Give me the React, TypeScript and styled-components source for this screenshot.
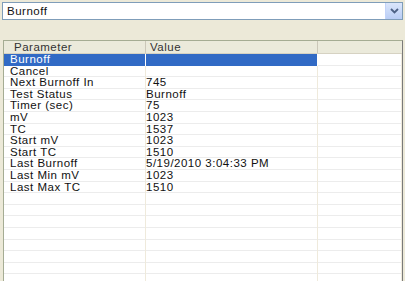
import React from "react";
import styled, { createGlobalStyle } from "styled-components";

const Global = createGlobalStyle`
  html, body {
    margin: 0;
    padding: 0;
    background: #ece9d8;
    overflow: hidden;
  }
`;

const Page = styled.div`
  width: 405px;
  height: 281px;
  background: #ece9d8;
  font-family: Tahoma, "Liberation Sans", Arial, sans-serif;
  font-size: 11.5px;
  letter-spacing: 0.5px;
  color: #111;
  display: flex;
  flex-direction: column;
  padding: 2px 2px 0 2px;
  box-sizing: border-box;
  overflow: hidden;
`;

const Combo = styled.div`
  height: 18px;
  background: #fff;
  border: 1px solid #7f9db9;
  box-sizing: border-box;
  display: flex;
  align-items: center;
  padding-left: 4px;
`;

const ComboText = styled.span`
  flex: 1;
  line-height: 14px;
`;

const DropButton = styled.div`
  width: 16px;
  height: 16px;
  background: linear-gradient(#dbe6fb, #b9cdf5);
  border-left: 1px solid #c2d3f9;
  display: flex;
  align-items: center;
  justify-content: center;
`;

const List = styled.div`
  margin-top: 20px;
  margin-left: 1px;
  flex: 1;
  background: #fff;
  border-left: 1px solid #a5ac93;
  border-right: 1px solid #7a7a7a;
  border-top: 1px solid #a5ac93;
  display: flex;
  flex-direction: column;
  overflow: hidden;
`;

const Header = styled.div`
  display: flex;
  height: 12px;
  flex-shrink: 0;
  background: #ebeadb;
  border-bottom: 1px solid #d6d2c2;
`;

const HeadCell = styled.div<{ $w?: number; $first?: boolean; $last?: boolean }>`
  ${(p) => (p.$w ? `width: ${p.$w}px;` : "flex: 1;")}
  box-sizing: border-box;
  padding-left: ${(p) => (p.$first ? 10 : 4)}px;
  line-height: 12px;
  color: #333;
  white-space: nowrap;
  border-right: ${(p) => (p.$last ? "none" : "1px solid #cbc7b8")};
`;

const Row = styled.div`
  display: flex;
  height: 11.6px;
  flex-shrink: 0;
  box-shadow: inset 0 -1px 0 #ececec;
`;

const Cell = styled.div<{ $w?: number; $sel?: boolean; $first?: boolean }>`
  ${(p) => (p.$w ? `width: ${p.$w}px;` : "flex: 1;")}
  box-sizing: border-box;
  padding-left: ${(p) => (p.$first ? 6 : 0)}px;
  line-height: 11.6px;
  white-space: nowrap;
  overflow: visible;
  background: ${(p) => (p.$sel ? "#316ac5" : "transparent")};
  color: ${(p) => (p.$sel ? "#fff" : "#111")};
  border-right: 1px solid ${(p) => (p.$sel ? "#fff" : "#efeadc")};
`;

const rows: [string, string][] = [
  ["Burnoff", ""],
  ["Cancel", ""],
  ["Next Burnoff In", "745"],
  ["Test Status", "Burnoff"],
  ["Timer (sec)", "75"],
  ["mV", "1023"],
  ["TC", "1537"],
  ["Start mV", "1023"],
  ["Start TC", "1510"],
  ["Last Burnoff", "5/19/2010 3:04:33 PM"],
  ["Last Min mV", "1023"],
  ["Last Max TC", "1510"],
  ["", ""],
  ["", ""],
  ["", ""],
  ["", ""],
  ["", ""],
  ["", ""],
  ["", ""],
  ["", ""],
];

export default function App() {
  return (
    <>
      <Global />
      <Page>
        <Combo>
          <ComboText>Burnoff</ComboText>
          <DropButton>
            <svg width="9" height="6" viewBox="0 0 9 6">
              <path d="M1 1 L4.5 4.5 L8 1" stroke="#4d6185" strokeWidth="1.8" fill="none" />
            </svg>
          </DropButton>
        </Combo>
        <List>
          <Header>
            <HeadCell $w={142} $first>Parameter</HeadCell>
            <HeadCell $w={172}>Value</HeadCell>
            <HeadCell $last />
          </Header>
          {rows.map(([k, v], i) => (
            <Row key={i}>
              <Cell $w={142} $sel={i === 0} $first>{k}</Cell>
              <Cell $w={172} $sel={i === 0}>{v}</Cell>
              <Cell />
            </Row>
          ))}
        </List>
      </Page>
    </>
  );
}
